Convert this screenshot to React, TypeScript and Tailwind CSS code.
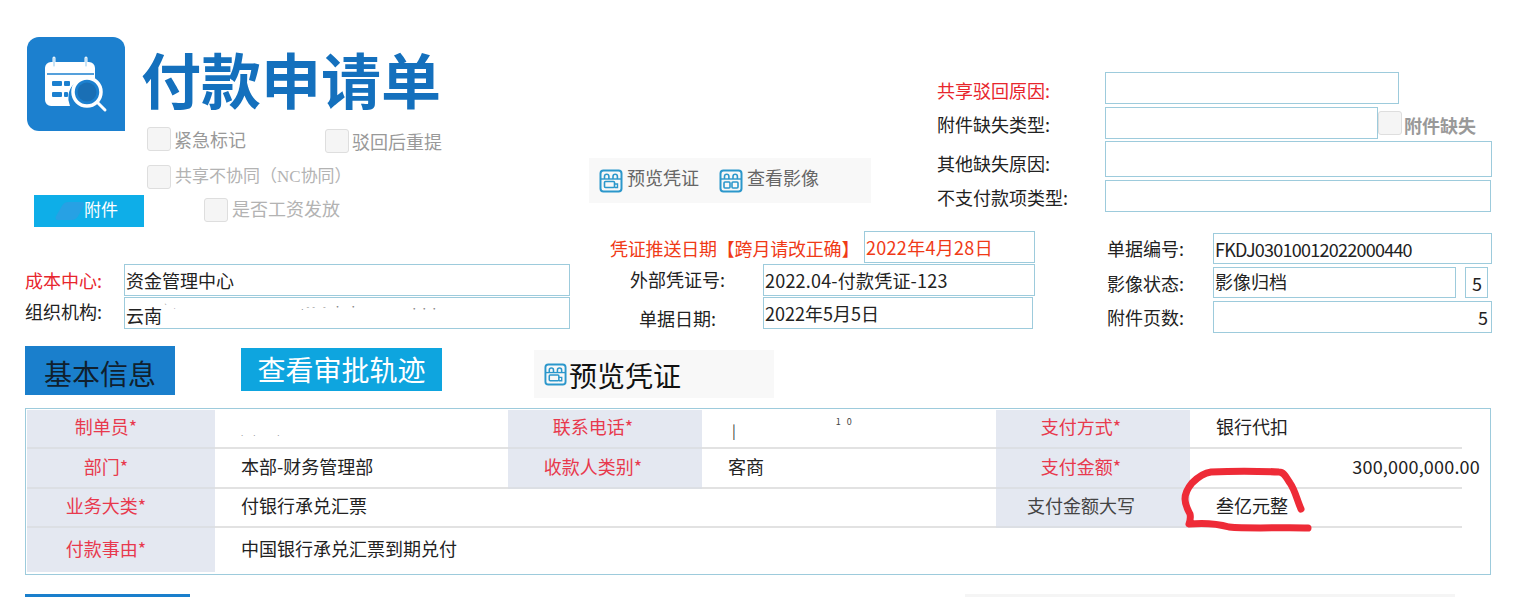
import React from 'react';

const VoucherIcon: React.FC<{ className?: string; image?: boolean }> = ({ className, image }) => (
  <svg className={className} viewBox="0 0 24 24" fill="none" stroke="#2b97cb" strokeWidth="2">
    <rect x="1.5" y="1.5" width="21" height="21" rx="3" />
    <path d="M1.5 10h21" strokeWidth="1.4" />
    <path d="M5.5 10V7.5a2.2 2.2 0 0 1 4.4 0V10M14 10V7.5a2.2 2.2 0 0 1 4.4 0V10" strokeWidth="1.6" />
    {image ? (
      <>
        <rect x="5" y="13" width="6" height="6" rx="1" strokeWidth="1.6" />
        <rect x="13" y="13" width="6" height="6" rx="1" strokeWidth="1.6" />
      </>
    ) : (
      <>
        <rect x="5.5" y="12.5" width="10" height="6" rx="1" strokeWidth="1.6" />
        <path d="M15.5 15h3v3.5h-3" strokeWidth="1.4" />
      </>
    )}
  </svg>
);

const LogoIcon: React.FC = () => (
  <svg className="h-[94px] w-[98px]" viewBox="0 0 98 94" fill="none">
    <path d="M18 31a6 6 0 0 1 6-6h38a6 6 0 0 1 6 6v11a20 20 0 0 0-25 27H24a6 6 0 0 1-6-6z" fill="#fff" />
    <path d="M27 21v9M59 21v9" stroke="#fff" strokeWidth="3" strokeLinecap="round" />
    <path d="M27 21v8M59 21v8" stroke="#8fc8ee" strokeWidth="1" strokeLinecap="round" />
    <path d="M20 37h47" stroke="#1c80cf" strokeWidth="1.5" />
    <rect x="25" y="44" width="10" height="5" rx="1" fill="#1c80cf" />
    <rect x="37" y="44" width="6" height="5" rx="1" fill="#1c80cf" />
    <rect x="25" y="55" width="10" height="5" rx="1" fill="#1c80cf" />
    <rect x="37" y="55" width="4" height="5" rx="1" fill="#1c80cf" />
    <circle cx="60" cy="55" r="14" fill="#1c80cf" stroke="#fff" strokeWidth="3.5" />
    <circle cx="60" cy="55" r="9.5" fill="#1a6fb5" />
    <path d="M71 66l7 7" stroke="#fff" strokeWidth="3" strokeLinecap="round" />
  </svg>
);

const Check: React.FC = () => (
  <span className="block h-6 w-6 shrink-0 rounded-[3px] border border-[#dedede] bg-[#f5f5f5]" />
);

const Field: React.FC<{ className: string; children?: React.ReactNode }> = ({ className, children }) => (
  <div className={`flex items-center overflow-hidden border border-[#9dcbdc] pl-[1px] text-[18px] leading-none whitespace-nowrap ${className}`}>
    {children}
  </div>
);

const Th: React.FC<{ className?: string; children: React.ReactNode }> = ({ className = 'pr-[24px]', children }) => (
  <div className={`flex items-center justify-center border-b-2 border-[#dcdfe4] bg-[#e4e8f1] pb-[5px] text-[18px] leading-none text-[#e8394d] ${className}`}>
    {children}
  </div>
);

const Td: React.FC<{ className?: string; children?: React.ReactNode }> = ({ className = '', children }) => (
  <div className={`flex items-center border-b-2 border-[#e2e2e2] pb-[5px] pl-[26px] text-[18px] leading-none text-[#222] ${className}`}>
    {children}
  </div>
);

export default function App() {
  return (
    <div className="relative h-[597px] w-[1534px] overflow-hidden bg-white font-['Noto_Sans_CJK_SC',sans-serif] text-[#222]">
      {/* top header */}
      <div className="flex h-[231px]">
        <div className="w-[589px] shrink-0 pl-[27px] pt-[37px]">
          <div className="flex">
            <div className="h-[94px] w-[98px] rounded-[12px] rounded-br-none bg-[#1c80cf]">
              <LogoIcon />
            </div>
            <h1 className="ml-[16px] mt-[5px] text-[60px] leading-[72px] font-bold whitespace-nowrap text-[#1470bd]">付款申请单</h1>
          </div>
          <div className="-mt-[4px] ml-[120px] flex items-start text-[18px] leading-6 text-[#999]">
            <Check />
            <span className="ml-[3px] w-[151px]">紧急标记</span>
            <div className="mt-[2px] flex">
              <Check />
              <span className="ml-[3px]">驳回后重提</span>
            </div>
          </div>
          <div className="ml-[120px] mt-[12px] flex text-[17px] leading-5 text-[#b3b3b3]">
            <Check />
            <span className="ml-[4px]">共享不协同（<span className="font-['Liberation_Serif',serif]">NC</span>协同）</span>
          </div>
          <div className="ml-[7px] mt-[6px] flex items-start">
            <button className="flex h-[32px] w-[110px] items-center bg-[#0eaee8] pb-[5px] pl-[25px] text-[17px] text-white">
              <span className="mt-[5px] h-[18px] w-[22px] -skew-x-30 rounded-[4px] bg-[#3f93e0]/50" />
              <span className="ml-[3px]">附件</span>
            </button>
            <div className="ml-[60px] mt-[3px] flex text-[18px] leading-5 text-[#b3b3b3]">
              <Check />
              <span className="ml-[4px]">是否工资发放</span>
            </div>
          </div>
        </div>

        <div className="w-[348px] shrink-0 pt-[158px]">
          <div className="flex h-[45px] w-[282px] items-center bg-[#f8f8f8] pl-[10px] text-[18px] text-[#666]">
            <VoucherIcon className="h-6 w-6" />
            <span className="mb-[6px] ml-[4px] w-[92px]">预览凭证</span>
            <VoucherIcon className="h-6 w-6" image />
            <span className="mb-[6px] ml-[4px]">查看影像</span>
          </div>
        </div>

        <div className="grid grid-cols-[168px_1fr] content-start pt-[72px] text-[18px] leading-none">
          <div className="flex h-[35px] items-center text-[#e8262d]">共享驳回原因:</div>
          <Field className="h-[32px] w-[294px]" />
          <div className="flex h-[34px] items-center pb-[1px]">附件缺失类型:</div>
          <div className="flex h-[34px] items-start">
            <Field className="h-[32px] w-[273px]" />
            <div className="mt-[4px]"><Check /></div>
            <span className="ml-[2px] mt-[9px] text-[18px] font-bold text-[#999]">附件缺失</span>
          </div>
          <div className="flex h-[39px] items-center pt-[4px]">其他缺失原因:</div>
          <Field className="h-[36px] w-[387px]" />
          <div className="flex h-[32px] items-center pt-[2px] whitespace-nowrap">不支付款项类型:</div>
          <Field className="h-[32px] w-[386px]" />
        </div>
      </div>

      {/* document fields */}
      <div className="flex h-[101px]">
        <div className="ml-[25px] grid w-[545px] shrink-0 grid-cols-[99px_1fr] content-start gap-y-[1px] pt-[33px] text-[18px]">
          <div className="flex items-center text-[#e8262d]">成本中心:</div>
          <Field className="h-[32px]">资金管理中心</Field>
          <div className="flex items-center pb-[4px]">组织机构:</div>
          <Field className="h-[32px]">
            <span className="mt-[4px]">云南</span>
            <span className="mb-[12px] ml-[2px] text-[6px] tracking-[6px] text-[#777]">`.</span>
            <span className="mb-[12px] ml-[120px] text-[8px] tracking-[3px] text-[#888]">.-- - · ·</span>
            <span className="mb-[8px] ml-[50px] text-[8px] tracking-[2px] text-[#888]">···</span>
          </Field>
        </div>
        <div className="ml-[40px] w-[425px] shrink-0">
          <div className="flex h-[33px] items-start">
            <span className="w-[254px] pt-[4px] text-[18px] leading-[27px] tracking-[-0.2px] whitespace-nowrap text-[#f03a17]">凭证推送日期【跨月请改正确】</span>
            <Field className="h-[32px] w-[171px] tracking-[0.3px] text-[#f03a17]">2022年4月28日</Field>
          </div>
          <div className="flex">
            <span className="ml-[20px] w-[133px] pt-[2px] text-[18px]">外部凭证号:</span>
            <Field className="h-[32px] w-[272px] tracking-[0.2px]">2022.04-付款凭证-123</Field>
          </div>
          <div className="mt-[1px] flex">
            <span className="ml-[29px] w-[124px] pt-[8px] text-[18px]">单据日期:</span>
            <Field className="h-[32px] w-[270px] items-start pt-[6px]">2022年5月5日</Field>
          </div>
        </div>
        <div className="ml-[72px] grid w-[385px] grid-cols-[106px_1fr] content-start gap-y-[3px] pt-[2px] text-[18px]">
          <div className="flex items-center">单据编号:</div>
          <Field className="h-[31px]">
            <span className="tracking-[-0.75px]">FKDJ03010012022000440</span>
          </Field>
          <div className="flex items-center pt-[1px]">影像状态:</div>
          <div className="flex h-[31px]">
            <Field className="w-[243px] pb-[4px]">影像归档</Field>
            <Field className="ml-[9px] w-[23px] justify-center">5</Field>
          </div>
          <div className="flex items-center">附件页数:</div>
          <Field className="h-[32px] justify-end pr-[3px]">5</Field>
        </div>
      </div>

      {/* tabs */}
      <div className="ml-[25px] mt-[14px] flex h-[62px] items-start text-[28px] leading-none">
        <div className="flex h-[49px] w-[150px] items-center justify-center bg-[#1a7fcc] pt-[4px] text-[#10202e]">基本信息</div>
        <div className="ml-[66px] mt-[2px] flex h-[43px] w-[201px] items-center justify-center bg-[#0ea5df] pb-[2px] text-white">查看审批轨迹</div>
        <div className="ml-[92px] mt-[4px] flex h-[48px] w-[240px] items-center bg-[#f8f8f8] pl-[10px] text-[#111]">
          <VoucherIcon className="h-[23px] w-[23px]" />
          <span className="ml-[2px] pt-[2px]">预览凭证</span>
        </div>
      </div>

      {/* basic info table */}
      <div className="mx-[25px] h-[167px] w-[1466px] border border-[#9dcbdc] pl-[1px] pt-[1px]">
        <div className="grid grid-cols-[188px_293px_194px_294px_194px_272px] grid-rows-[39px_40px_39px_44px]">
          <Th className="pr-[30px]">制单员*</Th>
          <Td>
            <span className="mt-[14px] text-[8px] tracking-[10px] text-[#999]">.. .</span>
          </Td>
          <Th>联系电话*</Th>
          <Td>
            <span className="ml-[4px] mt-[8px] text-[14px] text-[#333]">|</span>
            <span className="mb-[10px] ml-[100px] text-[9px] tracking-[2px] text-[#444]">1 0</span>
          </Td>
          <Th>支付方式*</Th>
          <Td>银行代扣</Td>
          <Th className="pr-[30px]">部门*</Th>
          <Td>本部-财务管理部</Td>
          <Th>收款人类别*</Th>
          <Td>客商</Td>
          <Th>支付金额*</Th>
          <Td className="justify-end overflow-visible pr-0">
            <span className="-mr-[18px] tracking-[0.2px]">300,000,000.00</span>
          </Td>
          <Th className="pr-[30px]">业务大类*</Th>
          <Td className="col-span-3">付银行承兑汇票</Td>
          <div className="flex items-center justify-center border-b-2 border-[#dcdfe4] bg-[#e4e8f1] pb-[5px] pr-[24px] text-[18px] leading-none text-[#444]">支付金额大写</div>
          <Td>叁亿元整</Td>
          <div className="flex items-center justify-center bg-[#e4e8f1] pb-[5px] pr-[30px] text-[18px] leading-none text-[#e8394d]">付款事由*</div>
          <div className="col-span-5 flex items-center pb-[5px] pl-[26px] text-[18px] leading-none text-[#222]">中国银行承兑汇票到期兑付</div>
        </div>
      </div>

      {/* next section edge */}
      <div className="mt-[19px] flex">
        <div className="ml-[25px] h-[3px] w-[165px] bg-[#1a7fcc]" />
        <div className="ml-[775px] h-[3px] w-[490px] bg-[#f5f5f5]" />
      </div>

      {/* hand drawn annotation on the screenshot */}
      <svg className="pointer-events-none absolute left-0 top-0 h-[597px] w-[1534px]" viewBox="0 0 1534 597" fill="none">
        <path
          d="M1301 509C1297 500 1295 490 1290 483C1286 477 1284 472 1279 472C1258 471 1230 471 1211 472C1203 473 1197 478 1192 483C1187 489 1185 493 1185 499C1185 505 1188 510 1190 514C1191 518 1190 521 1189 524C1200 523 1215 523 1229 527C1250 529 1285 527 1308 528"
          stroke="#ee2b37"
          strokeWidth="7"
          strokeLinecap="round"
          strokeLinejoin="round"
        />
      </svg>
    </div>
  );
}
